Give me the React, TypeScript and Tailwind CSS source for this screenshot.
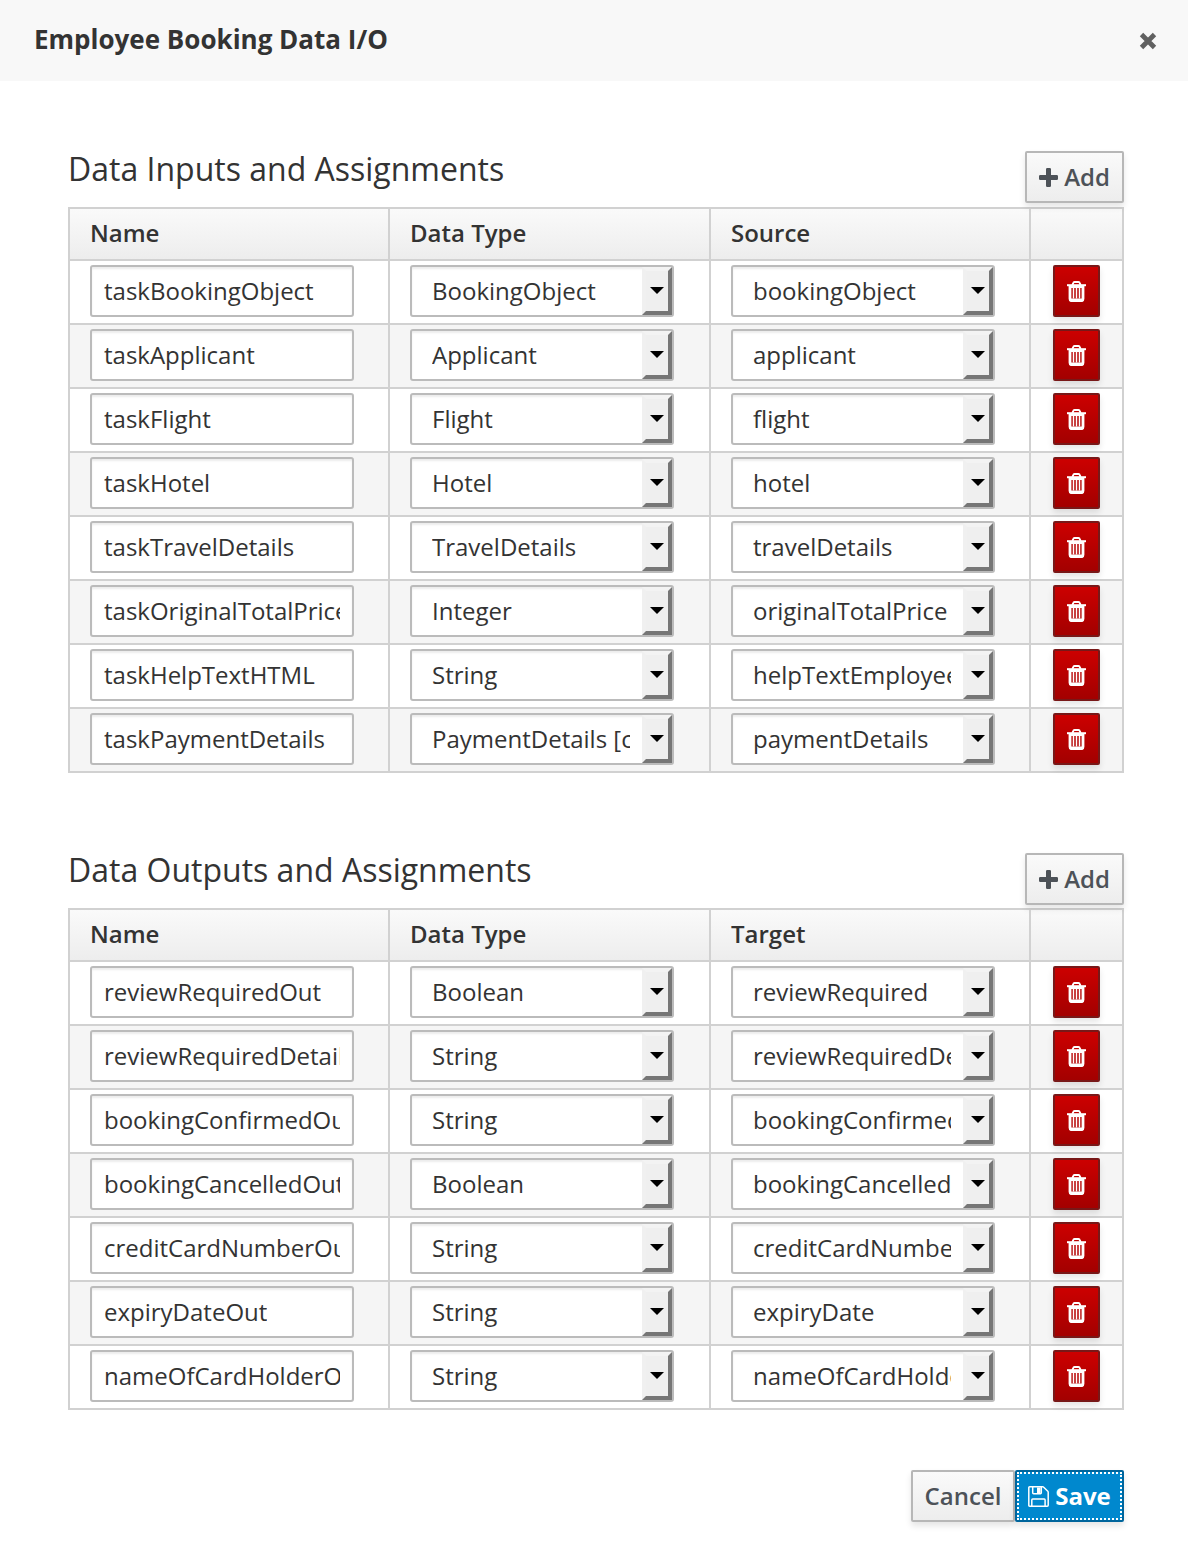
import { ReactNode } from "react";

type Row = [string, string, string];

const inputs: Row[] = [
  ["taskBookingObject", "BookingObject", "bookingObject"],
  ["taskApplicant", "Applicant", "applicant"],
  ["taskFlight", "Flight", "flight"],
  ["taskHotel", "Hotel", "hotel"],
  ["taskTravelDetails", "TravelDetails", "travelDetails"],
  ["taskOriginalTotalPrice", "Integer", "originalTotalPrice"],
  ["taskHelpTextHTML", "String", "helpTextEmployee"],
  ["taskPaymentDetails", "PaymentDetails [com]", "paymentDetails"],
];

const outputs: Row[] = [
  ["reviewRequiredOut", "Boolean", "reviewRequired"],
  ["reviewRequiredDetailsOut", "String", "reviewRequiredDetails"],
  ["bookingConfirmedOut", "String", "bookingConfirmed"],
  ["bookingCancelledOut", "Boolean", "bookingCancelled"],
  ["creditCardNumberOut", "String", "creditCardNumber"],
  ["expiryDateOut", "String", "expiryDate"],
  ["nameOfCardHolderOut", "String", "nameOfCardHolder"],
];

const columns = "grid grid-cols-[320px_321px_320px_95px]";

function PlusIcon() {
  return (
    <svg className="h-[19px] w-[19px] shrink-0" viewBox="0 0 19 19" fill="currentColor">
      <path d="M8.300 0h2.400A1.300 1.300 0 0 1 12 1.300V7h5.700A1.300 1.300 0 0 1 19 8.300v2.400a1.300 1.300 0 0 1-1.300 1.300H12v5.700a1.300 1.300 0 0 1-1.300 1.300H8.300A1.300 1.300 0 0 1 7 17.700V12H1.300A1.300 1.300 0 0 1 0 10.700V8.300A1.300 1.300 0 0 1 1.300 7H7V1.300A1.300 1.300 0 0 1 8.300 0z" />
    </svg>
  );
}

function TrashIcon() {
  return (
    <svg className="h-[21px] w-[19px]" viewBox="0 0 19 21" fill="none" stroke="#fff">
      <path d="M0 4.200h19" strokeWidth="2" />
      <path d="M5.500 4l.7-2q.3-1 1.300-1h4q1 0 1.300 1l.7 2" strokeWidth="2" />
      <path d="M3 4v13.800q0 1.900 1.600 1.900h9.800q1.600 0 1.600-1.900V4" strokeWidth="2.800" />
      <path d="M6.500 7v10.500M9.500 7v10.500M12.500 7v10.500" strokeWidth="1.500" />
      <path d="M3 6h13M3 18.500h13" strokeWidth="2" />
    </svg>
  );
}

function SaveIcon() {
  return (
    <svg className="h-[21px] w-[21px] shrink-0" viewBox="0 0 21 21" fill="none" stroke="#fff" strokeWidth="1.500">
      <path d="M.8 1.700q0-.9.9-.9h13q.6 0 1 .4l4.100 4.100q.4.4.4 1v13q0 .9-.9.9H1.700q-.9 0-.9-.9z" />
      <path d="M4.700 1v5.800q0 .9.9.9h6.800q.9 0 .9-.9V1M3.800 20v-6q0-.9.9-.9h11.500q.9 0 .9.900v6" />
      <path d="M9 1.500h3.500v5.800H9z" fill="#fff" stroke="none" />
    </svg>
  );
}

function TextField({ value }: { value: string }) {
  return (
    <div className="ml-5 flex h-[52px] w-[264px] items-center rounded-[3px] border-2 border-[#bbb] bg-white px-3 shadow-[inset_0_2px_2px_rgba(3,3,3,0.075)]">
      <div className="overflow-hidden whitespace-nowrap">{value}</div>
    </div>
  );
}

function SelectField({ value }: { value: string }) {
  return (
    <div className="ml-5 flex h-[52px] w-[264px] items-stretch rounded-[3px] border-2 border-[#bbb] bg-white pl-5 shadow-[inset_0_2px_2px_rgba(3,3,3,0.075)]">
      <div className="mr-3 w-[198px] self-center overflow-hidden whitespace-nowrap">{value}</div>
      <div className="flex w-[30px] items-center justify-center border-4 border-t-[#f3f3f3] border-r-[#767676] border-b-[#767676] border-l-[#f0f0f0] bg-[#efefef]">
        <svg className="mt-[-2px] h-[7px] w-[14px] shrink-0" viewBox="0 0 14 7">
          <path d="M0 0h14L7 7z" fill="#000" />
        </svg>
      </div>
    </div>
  );
}

function Cell({ children }: { children?: ReactNode }) {
  return <div className="flex items-center border-l-2 border-[#d1d1d1] pb-0.5">{children}</div>;
}

function Assignments({ title, last, rows, heading }: { title: string; last: string; rows: Row[]; heading: string }) {
  return (
    <section>
      <div className={"flex items-start justify-between " + heading}>
        <h3 className="text-[32px]">{title}</h3>
        <button className="flex h-[52px] w-[99px] items-center justify-center gap-[6px] rounded-[2px] border-2 border-[#b7b7b7] bg-linear-to-b from-[#fafafa] to-[#ededed] font-semibold text-[#4d5258] shadow-[0_4px_6px_rgba(3,3,3,0.1)]">
          <PlusIcon />
          Add
        </button>
      </div>
      <div className="border-r-2 border-b-2 border-[#d1d1d1]">
        <div className={columns + " h-[52px] border-t-2 border-[#d1d1d1] bg-linear-to-b from-[#fafafa] to-[#ededed] font-semibold"}>
          {["Name", "Data Type", last, ""].map((h, i) => (
            <Cell key={i}>
              <span className="pl-5">{h}</span>
            </Cell>
          ))}
        </div>
        {rows.map(([name, type, value]) => (
          <div key={name} className={columns + " h-16 border-t-2 border-[#d1d1d1] even:bg-white odd:bg-[#f5f5f5]"}>
            <Cell>
              <TextField value={name} />
            </Cell>
            <Cell>
              <SelectField value={type} />
            </Cell>
            <Cell>
              <SelectField value={value} />
            </Cell>
            <Cell>
              <button className="ml-[22px] flex h-[52px] w-[47px] items-center justify-center rounded-[2px] border-2 border-[#781818] bg-linear-to-b from-[#cc0000] to-[#a30000] shadow-[0_4px_6px_rgba(3,3,3,0.1)]">
                <TrashIcon />
              </button>
            </Cell>
          </div>
        ))}
      </div>
    </section>
  );
}

export default function App() {
  return (
    <main className="h-[1546px] w-[1188px] overflow-hidden bg-white font-['Open_Sans',sans-serif] text-2xl text-[#333]">
      <header className="flex h-[81px] items-center justify-between bg-[#f8f8f8] pr-[31px] pl-[34px]">
        <h1 className="pb-1 text-[26px] leading-8 font-bold">Employee Booking Data I/O</h1>
        <svg className="mt-px h-[18px] w-[18px]" viewBox="0 0 18 18">
          <path d="M2.500 2.500l13 13M15.500 2.500l-13 13" stroke="#616161" strokeWidth="4.800" />
        </svg>
      </header>
      <div className="flex flex-col gap-20 px-16 pt-[70px] pl-[68px]">
        <Assignments title="Data Inputs and Assignments" last="Source" rows={inputs} heading="h-14 leading-9" />
        <Assignments title="Data Outputs and Assignments" last="Target" rows={outputs} heading="h-[55px] leading-[34px]" />
      </div>
      <footer className="mt-[60px] flex justify-end pr-16">
        <button className="flex h-[52px] w-[104px] items-center justify-center rounded-[2px] border-2 border-[#b7b7b7] bg-linear-to-b from-[#fafafa] to-[#ededed] font-semibold text-[#4d5258] shadow-[0_4px_6px_rgba(3,3,3,0.1)]">
          Cancel
        </button>
        <button className="h-[52px] w-[109px] rounded-[2px] border-2 border-[#00659c] bg-[#0088ce] text-white shadow-[0_4px_6px_rgba(3,3,3,0.1)]">
          <span className="flex h-full items-center justify-center gap-[6px] border-2 border-dotted border-white font-bold">
            <SaveIcon />
            Save
          </span>
        </button>
      </footer>
    </main>
  );
}
